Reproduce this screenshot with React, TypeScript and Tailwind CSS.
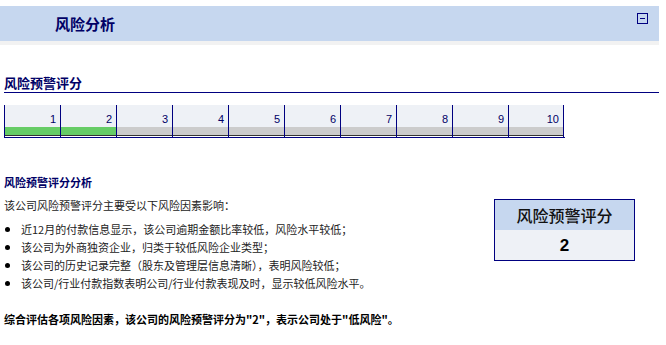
import React from "react";

const SCORE = 2;
const LEVELS = [1, 2, 3, 4, 5, 6, 7, 8, 9, 10];

const FACTORS = [
  "近12月的付款信息显示，该公司逾期金额比率较低，风险水平较低；",
  "该公司为外商独资企业，归类于较低风险企业类型；",
  "该公司的历史记录完整（股东及管理层信息清晰），表明风险较低；",
  "该公司/行业付款指数表明公司/行业付款表现及时，显示较低风险水平。",
];

function ScoreScale() {
  return (
    <div className="ml-[4px] mt-[12px] flex w-[561px] border-b border-[#000080]">
      {LEVELS.map((n, i) => (
        <div
          key={n}
          className={
            "flex w-[56px] flex-col border-l border-[#000080]" +
            (i === LEVELS.length - 1 ? " border-r" : "")
          }
        >
          <div className="flex h-[22px] items-end justify-end bg-[#eef1f6] pb-[2px] pr-[4px] font-['Liberation_Sans',sans-serif] text-[11px] leading-none text-[#000066]">
            {n}
          </div>
          <div className={n <= SCORE ? "h-[8px] bg-[#66cc66]" : "h-[8px] bg-[#cccccc]"} />
          <div className="h-[1px] bg-[#333333]" />
          <div className="h-[1px] bg-white" />
        </div>
      ))}
    </div>
  );
}

export default function App() {
  return (
    <div className="w-[666px] bg-white font-['Noto_Sans_CJK_SC',sans-serif] text-[#222222]">
      <div className="w-[659px] pt-[6px]">
        <div className="flex h-[35px] items-start justify-between bg-[#c6d7ef] pl-[55px] pr-[11px]">
          <h1 className="self-center text-[15px] font-bold leading-none text-[#000066]">风险分析</h1>
          <button
            aria-label="collapse"
            className="mt-[7px] flex h-[11px] w-[11px] items-center justify-center border border-[#000080]"
            type="button"
          >
            <span className="h-[1px] w-[5px] bg-[#000080]" />
          </button>
        </div>
        <div className="h-[4px] bg-[#f2f2f2]" />

        <h2 className="ml-[4px] mt-[30px] border-b border-[#000080] pb-[1px] text-[13px] font-bold leading-[16px] text-[#000066]">
          风险预警评分
        </h2>

        <ScoreScale />

        <div className="mt-[37px] flex pl-[4px]">
          <div className="w-[490px] text-[11px]">
            <h3 className="font-bold leading-[14px] text-[#000066]">风险预警评分分析</h3>
            <p className="mt-[9px] leading-[14px]">该公司风险预警评分主要受以下风险因素影响：</p>
            <ul className="mt-[8px]">
              {FACTORS.map((f) => (
                <li key={f} className="flex items-center leading-[18px]">
                  <span className="ml-[1px] mr-[11px] h-[5px] w-[5px] rounded-full bg-black" />
                  {f}
                </li>
              ))}
            </ul>
          </div>
          <div className="mt-[24px] flex h-[62px] w-[141px] flex-col border border-[#000080]">
            <div className="flex h-[30px] items-center justify-center bg-[#c6d7ef] text-[16px] font-medium leading-none text-[#111111]">
              风险预警评分
            </div>
            <div className="flex h-[30px] items-center justify-center bg-[#eef1f6] font-['Liberation_Sans',sans-serif] text-[17px] font-bold leading-none text-black">
              {SCORE}
            </div>
          </div>
        </div>

        <p className="ml-[4px] mt-[20px] text-[11px] font-bold leading-[14px] text-black">
          综合评估各项风险因素，该公司的风险预警评分为"2"，表示公司处于"低风险"。
        </p>
      </div>
    </div>
  );
}
